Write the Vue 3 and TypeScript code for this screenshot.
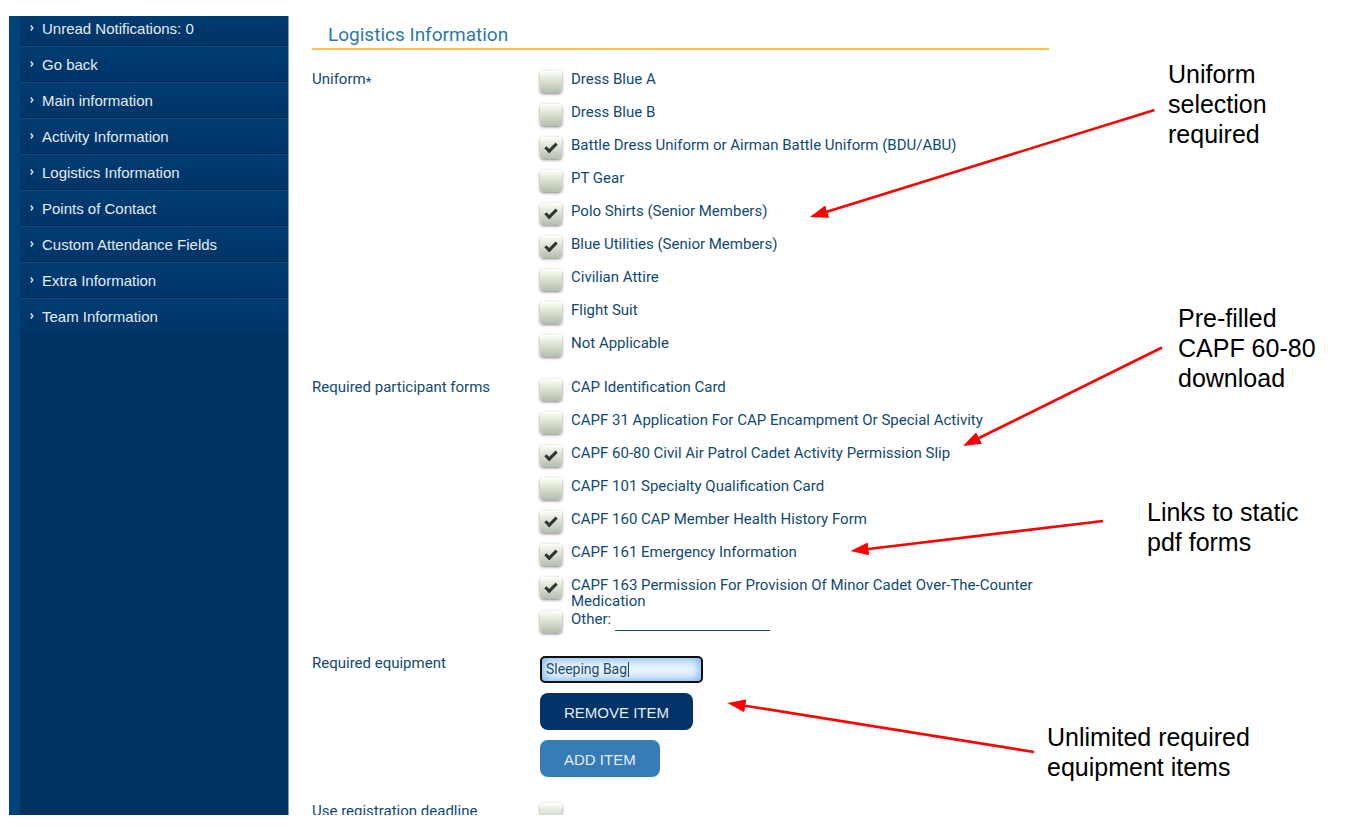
<script setup lang="ts">
import { ref } from 'vue'

interface Option {
  id: string
  label: string
  checked: boolean
}

const menu: string[] = [
  'Unread Notifications: 0',
  'Go back',
  'Main information',
  'Activity Information',
  'Logistics Information',
  'Points of Contact',
  'Custom Attendance Fields',
  'Extra Information',
  'Team Information',
]

const uniforms = ref<Option[]>([
  { id: 'u1', label: 'Dress Blue A', checked: false },
  { id: 'u2', label: 'Dress Blue B', checked: false },
  { id: 'u3', label: 'Battle Dress Uniform or Airman Battle Uniform (BDU/ABU)', checked: true },
  { id: 'u4', label: 'PT Gear', checked: false },
  { id: 'u5', label: 'Polo Shirts (Senior Members)', checked: true },
  { id: 'u6', label: 'Blue Utilities (Senior Members)', checked: true },
  { id: 'u7', label: 'Civilian Attire', checked: false },
  { id: 'u8', label: 'Flight Suit', checked: false },
  { id: 'u9', label: 'Not Applicable', checked: false },
])

const forms = ref<Option[]>([
  { id: 'f1', label: 'CAP Identification Card', checked: false },
  { id: 'f2', label: 'CAPF 31 Application For CAP Encampment Or Special Activity', checked: false },
  { id: 'f3', label: 'CAPF 60-80 Civil Air Patrol Cadet Activity Permission Slip', checked: true },
  { id: 'f4', label: 'CAPF 101 Specialty Qualification Card', checked: false },
  { id: 'f5', label: 'CAPF 160 CAP Member Health History Form', checked: true },
  { id: 'f6', label: 'CAPF 161 Emergency Information', checked: true },
  { id: 'f7', label: 'CAPF 163 Permission For Provision Of Minor Cadet Over-The-Counter Medication', checked: true },
])

const otherChecked = ref(false)
const otherForm = ref('')
const equipment = ref('Sleeping Bag')
const deadline = ref(false)
</script>

<template>
  <div class="page">
    <div class="app">
      <nav class="sidebar" aria-label="Activity sections">
        <ul class="menu">
          <li v-for="item in menu" :key="item">
            <a href="#">
              <svg class="chevron" viewBox="0 0 4 6" aria-hidden="true">
                <path d="M0.8 0.5 L2.8 3 L0.8 5.5" fill="none" stroke="currentColor" stroke-width="1.4" />
              </svg>
              {{ item }}
            </a>
          </li>
        </ul>
      </nav>

      <main class="content">
        <h2 class="title">Logistics Information</h2>
        <form class="form" @submit.prevent>
          <fieldset class="group" aria-labelledby="uniform-label">
            <div id="uniform-label" class="name">Uniform<span class="star">*</span></div>
            <ul class="options">
              <li v-for="o in uniforms" :key="o.id">
                <input :id="o.id" v-model="o.checked" type="checkbox" class="tick" />
                <label :for="o.id">{{ o.label }}</label>
              </li>
            </ul>
          </fieldset>

          <fieldset class="group" aria-labelledby="forms-label">
            <div id="forms-label" class="name">Required participant forms</div>
            <ul class="options">
              <li v-for="o in forms" :key="o.id">
                <input :id="o.id" v-model="o.checked" type="checkbox" class="tick" />
                <label :for="o.id">{{ o.label }}</label>
              </li>
              <li>
                <input id="other" v-model="otherChecked" type="checkbox" class="tick" />
                <label for="other">Other:</label>
                <input v-model="otherForm" type="text" class="other" aria-label="Other form" />
              </li>
            </ul>
          </fieldset>

          <div class="group">
            <label class="name" for="equipment">Required equipment</label>
            <div class="stack">
              <div class="field">
                <input id="equipment" v-model="equipment" type="text" class="text" />
                <span class="caret" aria-hidden="true"></span>
              </div>
              <button type="button" class="btn remove">REMOVE ITEM</button>
              <button type="button" class="btn add">ADD ITEM</button>
            </div>
          </div>

          <div class="group">
            <label class="name" for="deadline">Use registration deadline</label>
            <input id="deadline" v-model="deadline" type="checkbox" class="tick" />
          </div>
        </form>
      </main>
    </div>

    <svg class="arrows" width="1359" height="831" viewBox="0 0 1359 831" aria-hidden="true">
      <defs>
        <marker id="head" viewBox="0 0 18 13" refX="18" refY="6.5" markerWidth="18" markerHeight="13" markerUnits="userSpaceOnUse" orient="auto">
          <path d="M0 0 L18 6.500 L0 13 Z" fill="#ff0000" />
        </marker>
      </defs>
      <g stroke="#ff0000" stroke-width="2.6">
        <path d="M1154.500 110 L826 212" />
        <path d="M1162 347.500 L979 438" />
        <path d="M1103 521 L868 549" />
        <path d="M1034 752 L745 705.700" />
      </g>
      <g stroke="none" fill="none">
        <path d="M1154.500 110 L810 217" marker-end="url(#head)" />
        <path d="M1162 347.500 L963 446" marker-end="url(#head)" />
        <path d="M1103 521 L850.500 551" marker-end="url(#head)" />
        <path d="M1034 752 L727.500 703" marker-end="url(#head)" />
      </g>
    </svg>
    <p class="note note-uniform">Uniform<br />selection<br />required</p>
    <p class="note note-prefilled">Pre-filled<br />CAPF 60-80<br />download</p>
    <p class="note note-links">Links to static<br />pdf forms</p>
    <p class="note note-items">Unlimited required<br />equipment items</p>
  </div>
</template>

<style>
body {
  margin: 0;
  background: #fff;
}
</style>

<style scoped>
.page {
  position: relative;
  box-sizing: border-box;
  height: 100vh;
  padding: 16px 9px;
  overflow: hidden;
  font-family: Roboto, 'Liberation Sans', sans-serif;
  font-size: 15px;
  line-height: 16px;
  color: #104a72;
}
.app {
  display: flex;
  height: 100%;
  overflow: hidden;
}
.sidebar {
  box-sizing: border-box;
  flex: 0 0 280px;
  background: #003262;
  border-left: 11px solid #00437a;
  border-right: 1px solid #7f9bb5;
}
ul {
  list-style: none;
  margin: 0;
  padding: 0;
}
.menu {
  margin-top: -6px;
}
.menu a {
  box-sizing: border-box;
  display: flex;
  align-items: center;
  gap: 8px;
  height: 36px;
  padding: 2px 0 0 10px;
  border-top: 1px solid #104a7d;
  border-bottom: 1px solid #002c5c;
  background: linear-gradient(#003b70, #003568);
  color: #e4ebf2;
  font-family: 'Liberation Sans', Arial, sans-serif;
  font-size: 15px;
  text-decoration: none;
}
.menu li:last-child a {
  border-bottom-color: #003568;
}
.chevron {
  width: 4px;
  height: 6px;
  margin-bottom: 3px;
}
.content {
  flex: 0 1 737px;
  padding-left: 23px;
}
.title {
  margin: 0;
  padding: 7px 16px 1px;
  border-bottom: 2px solid #fdbf4f;
  color: #2c78aa;
  font-size: 19px;
  font-weight: 400;
  line-height: 24px;
}
.form {
  display: flex;
  flex-direction: column;
  gap: 12px;
  padding-top: 21px;
}
.group {
  display: grid;
  grid-template-columns: 228px 1fr;
  align-items: start;
  min-width: 0;
  margin: 0;
  padding: 0;
  border: 0;
}
.star {
  font-size: 13px;
  vertical-align: -2px;
  line-height: 1;
}
.options li {
  display: flex;
  align-items: flex-start;
  gap: 9px;
  min-height: 33px;
}
.options li:last-child {
  min-height: 32px;
}
.options label {
  padding-bottom: 2px;
}
.tick {
  appearance: none;
  position: relative;
  flex: none;
  width: 22px;
  height: 22px;
  margin: 0;
  border-radius: 4px;
  background: linear-gradient(#fcfff4 0%, #dfe5d7 40%, #b3bead 100%);
  box-shadow: inset 0 1px 1px #fff, 0 1px 3px rgba(0, 0, 0, 0.5);
}
.tick:checked::after {
  content: '';
  position: absolute;
  top: 6px;
  left: 5px;
  width: 9px;
  height: 4px;
  border: 3px solid #333;
  border-top: 0;
  border-right: 0;
  transform: rotate(-45deg);
}
.other {
  box-sizing: border-box;
  width: 155px;
  height: 20px;
  margin-left: -5px;
  padding: 0;
  border: 0;
  border-bottom: 1px solid #104a72;
  background: none;
  color: inherit;
  font: inherit;
  outline: none;
}
.stack {
  display: flex;
  flex-direction: column;
  align-items: flex-start;
  gap: 10px;
  padding: 1px 0 14px;
}
.field {
  position: relative;
}
.text {
  display: block;
  box-sizing: border-box;
  width: 163px;
  height: 27px;
  padding: 0 4px 2px;
  border: 2px solid #101010;
  border-radius: 5px;
  background: #eef6ff;
  box-shadow: inset 0 0 12px #4fa6ee;
  color: #1c4a6e;
  font-family: Roboto, 'Liberation Sans', sans-serif;
  font-size: 14px;
  outline: none;
}
.caret {
  position: absolute;
  top: 6px;
  left: 88px;
  width: 1px;
  height: 15px;
  background: #104a72;
}
.btn {
  height: 37px;
  padding: 1px 24px 0;
  border: 0;
  border-radius: 8px;
  color: #e6edf4;
  font-family: 'Liberation Sans', Arial, sans-serif;
  font-size: 15px;
}
.remove {
  background: #003468;
}
.add {
  background: #367cb7;
}
.arrows {
  position: absolute;
  top: 0;
  left: 0;
  pointer-events: none;
}
.note {
  position: absolute;
  margin: 0;
  color: #000;
  font-family: 'Liberation Sans', Arial, sans-serif;
  font-size: 25px;
  line-height: 30px;
  white-space: nowrap;
}
.note-uniform {
  top: 59px;
  left: 1168px;
}
.note-prefilled {
  top: 303px;
  left: 1178px;
}
.note-links {
  top: 497px;
  left: 1147px;
}
.note-items {
  top: 722px;
  left: 1047px;
}
</style>
